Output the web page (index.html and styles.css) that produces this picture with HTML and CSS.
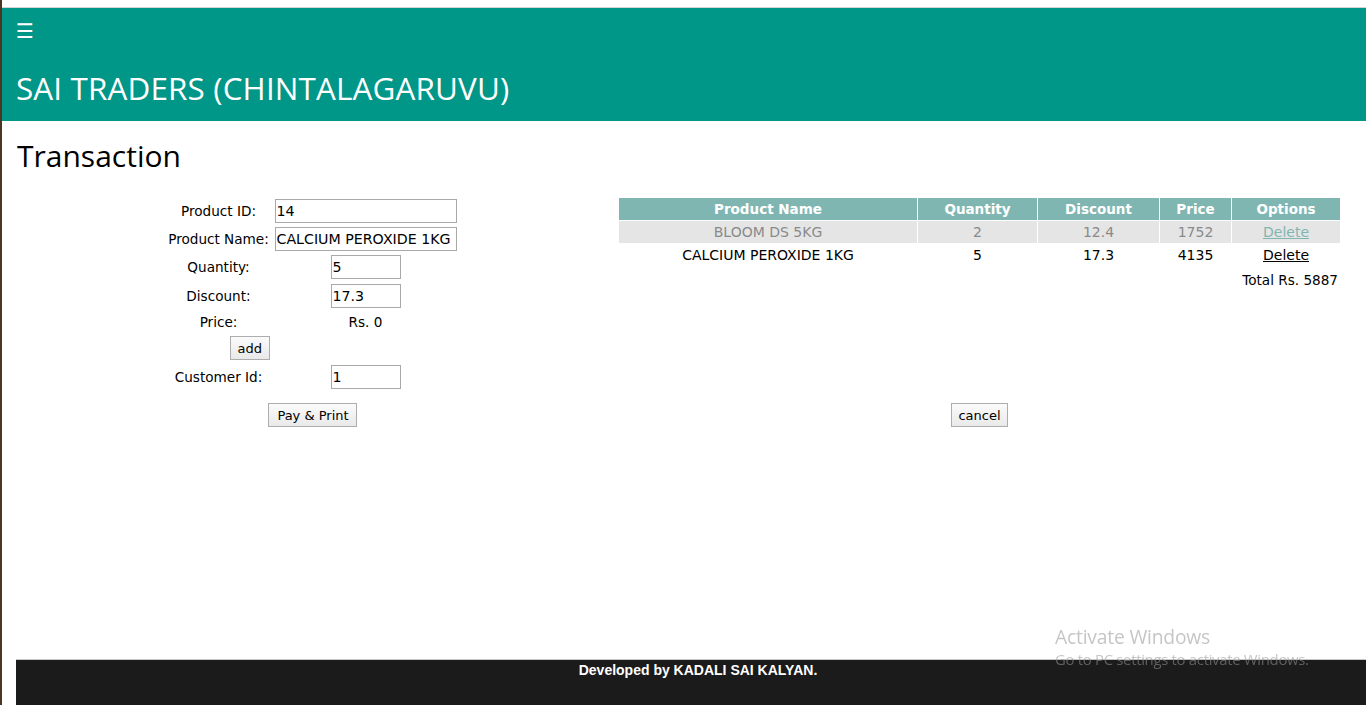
FILE: index.html
```html
<!DOCTYPE html>
<html>
<head>
<meta charset="utf-8">
<title>Transaction</title>
<link rel="stylesheet" href="styles.css">
</head>
<body>
<div class="chrome"></div>
<header class="header">
  <div class="burger">&#9776;</div>
  <div class="brand">SAI TRADERS (CHINTALAGARUVU)</div>
</header>
<main class="main">
  <h1 class="page-title">Transaction</h1>
  <div class="content">
    <section class="left">
      <div class="form">
        <div class="row r1"><span class="label">Product ID:</span><span class="field"><input class="inp wide" value="14"></span></div>
        <div class="row r2"><span class="label">Product Name:</span><span class="field"><input class="inp wide" value="CALCIUM PEROXIDE 1KG"></span></div>
        <div class="row r3"><span class="label">Quantity:</span><span class="field"><input class="inp small" value="5"></span></div>
        <div class="row r4"><span class="label">Discount:</span><span class="field"><input class="inp small" value="17.3"></span></div>
        <div class="row r5"><span class="label">Price:</span><span class="field">Rs. 0</span></div>
        <div class="row r6"><button class="btn add">add</button></div>
        <div class="row r7"><span class="label">Customer Id:</span><span class="field"><input class="inp small" value="1"></span></div>
        <div class="row r8"><button class="btn pay">Pay &amp; Print</button></div>
      </div>
    </section>
    <section class="right">
      <table class="cart">
        <thead>
          <tr><th class="c1">Product Name</th><th class="c2">Quantity</th><th class="c3">Discount</th><th class="c4">Price</th><th class="c5">Options</th></tr>
        </thead>
        <tbody>
          <tr class="alt"><td>BLOOM DS 5KG</td><td>2</td><td>12.4</td><td>1752</td><td><a href="#">Delete</a></td></tr>
          <tr><td>CALCIUM PEROXIDE 1KG</td><td>5</td><td>17.3</td><td>4135</td><td><a href="#">Delete</a></td></tr>
        </tbody>
      </table>
      <div class="total">Total Rs. 5887</div>
      <div class="cancel-row"><button class="btn">cancel</button></div>
    </section>
  </div>
</main>
<footer class="footer">Developed by KADALI SAI KALYAN.</footer>
<div class="watermark">
  <div class="wm1">Activate Windows</div>
  <div class="wm2">Go to PC settings to activate Windows.</div>
</div>
</body>
</html>
```
FILE: styles.css
```css
html, body {
  margin: 0;
  padding: 0;
  height: 705px;
  overflow: hidden;
}
body {
  border-left: 2px solid #4b3621;
  background: #fff;
  font-family: "DejaVu Sans", Verdana, sans-serif;
  font-size: 13.6px;
  color: #000;
  display: flex;
  flex-direction: column;
  box-sizing: border-box;
}
.chrome {
  height: 7px;
  background: #fff;
  border-bottom: 1px solid #d4d4d4;
  flex: none;
}
.header {
  flex: none;
  height: 113px;
  background: #009688;
  color: #fff;
  padding-left: 14px;
  box-sizing: border-box;
}
.burger {
  font-family: "DejaVu Sans", sans-serif;
  font-size: 20px;
  line-height: 20px;
  padding-top: 13px;
  height: 34px;
  box-sizing: border-box;
}
.brand {
  font-family: "Open Sans", "Noto Sans", sans-serif;
  font-size: 31.4px;
  line-height: 40px;
  margin-top: 26px;
  letter-spacing: 0.15px;
}
.main {
  flex: 1;
  padding: 0 16px 0 14px;
}
.page-title {
  font-family: "Open Sans", "Noto Sans", sans-serif;
  font-weight: normal;
  font-size: 30px;
  line-height: 40px;
  margin: 15px 0 0 1px;
  letter-spacing: 0;
}
.content {
  display: flex;
  margin-top: 22px;
}
.left {
  width: 594px;
  flex: none;
  display: flex;
  justify-content: center;
}
.form {
  width: 291px;
  display: flex;
  flex-direction: column;
  padding-top: 1px;
  margin-right: 4px;
}
.row {
  display: flex;
  align-items: center;
  height: 24px;
}
.label {
  width: 106px;
  text-align: center;
  flex: none;
  margin-right: 3px;
}
.field {
  width: 182px;
  text-align: center;
  display: flex;
  justify-content: center;
}
.r1, .r2, .r4 { margin-bottom: 4px; }
.r3 { margin-bottom: 5px; }
.r5 { height: 20px; margin-bottom: 4px; }
.r6 { margin-bottom: 5px; padding-left: 64px; }
.r7 { margin-bottom: 14px; }
.r8 { justify-content: center; padding-left: 3px; }
.inp {
  font-family: "DejaVu Sans", Verdana, sans-serif;
  font-size: 14.2px;
  height: 24px;
  box-sizing: border-box;
  border: 1px solid #a9a9a9;
  padding: 1px 1px;
  margin: 0;
  color: #000;
}
.inp.wide { width: 182px; }
.inp.small { width: 70px; }
.btn {
  font-family: "DejaVu Sans", Verdana, sans-serif;
  font-size: 13px;
  height: 24px;
  padding: 0 6px;
  border: 1px solid #adadad;
  border-radius: 0;
  background: linear-gradient(#fbfbfb, #e9e9e9);
  color: #000;
  margin: 0;
}
.btn.add { padding: 0 7px; }
.btn.pay { padding: 0 7px 0 8px; }
.right {
  flex: 1;
  padding-left: 9px;
}
.cart {
  width: 721px;
  border-collapse: collapse;
  text-align: center;
  font-size: 14px;
}
.cart th, .cart td {
  border: 1px solid #fff;
  padding: 0;
  height: 22px;
}
.cart thead th {
  border-top: 0;
  background: #80b6b2;
  color: #fff;
  font-weight: bold;
  font-size: 13.5px;
}
.cart th:first-child, .cart td:first-child { border-left: 0; }
.cart th:last-child, .cart td:last-child { border-right: 0; }
.c1 { width: 298px; }
.c2 { width: 119px; }
.c3 { width: 121px; }
.c4 { width: 71px; }
.c5 { width: 108px; }
.cart tr.alt td {
  background: #e5e5e5;
  color: #8a8a8a;
}
.cart a { color: #000; }
.cart tr.alt a { color: #80b6b2; }
.total {
  width: 719px;
  text-align: right;
  margin-top: 3px;
  line-height: 20px;
  font-size: 13.6px;
}
.cancel-row {
  width: 721px;
  display: flex;
  justify-content: center;
  margin-top: 113px;
}
.footer {
  flex: none;
  height: 46px;
  margin-left: 14px;
  padding-left: 14px;
  background: #1b1b1b;
  border-top: 1px solid #c8c8c8;
  color: #fff;
  font-family: "Liberation Sans", Arial, sans-serif;
  font-weight: bold;
  font-size: 14px;
  text-align: center;
  line-height: 20px;
  box-sizing: border-box;
}
.watermark {
  position: fixed;
  left: 1055px;
  top: 624px;
  color: rgba(150, 150, 150, 0.55);
  font-family: "Open Sans", "Noto Sans", sans-serif;
  pointer-events: none;
}
.wm1 { font-size: 19.3px; line-height: 26px; letter-spacing: -0.2px; }
.wm2 { font-size: 14.9px; line-height: 19px; letter-spacing: -0.3px; }
```
